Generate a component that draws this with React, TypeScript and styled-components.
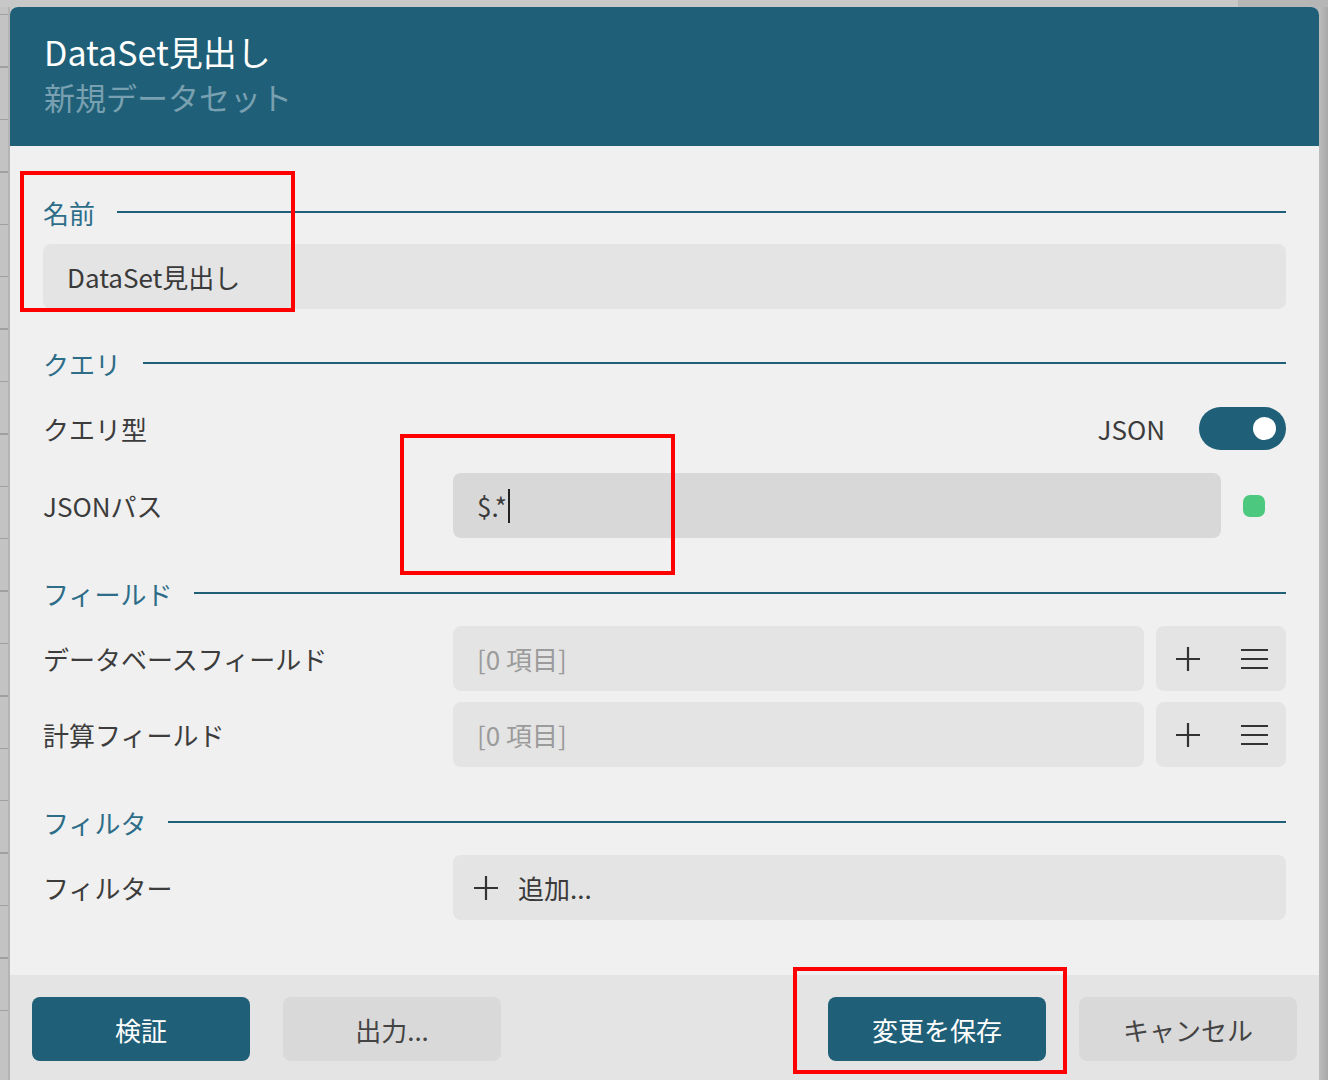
import styled, { createGlobalStyle } from "styled-components";

const GlobalStyle = createGlobalStyle`
  html, body {
    margin: 0;
    padding: 0;
    background: #c6c6c6;
  }
  body {
    font-family: "Noto Sans CJK JP", "Noto Sans", sans-serif;
  }
`;

const TEAL = "#1f5f77";

const Page = styled.div`
  position: relative;
  width: 1328px;
  height: 1080px;
  overflow: hidden;
  display: flex;
  flex-direction: column;
  background: linear-gradient(to right, #c8c8c8 0, #c8c8c8 1238px, #b6b6b6 1238px);
`;

const TopStrip = styled.div`
  height: 7px;
  flex: none;
`;

const Stage = styled.div`
  flex: 1;
  display: flex;
  min-height: 0;
`;

const Ruler = styled.div`
  width: 10px;
  flex: none;
  background-color: #c3c3c3;
  background-image: repeating-linear-gradient(
    to bottom,
    transparent 0px,
    transparent 51px,
    #a0a0a0 51px,
    #a0a0a0 52.4px
  );
  background-position: 0 -44px;
  box-shadow: inset -2px 0 0 #b4b4b4;
`;

const EdgeRight = styled.div`
  width: 9px;
  flex: none;
  background: linear-gradient(to right, #bcbcbc, #a8a8a8);
`;

const Dialog = styled.div`
  width: 1309px;
  flex: none;
  display: flex;
  flex-direction: column;
  background: #f0f0f0;
  border-radius: 8px 8px 0 0;
  overflow: hidden;
`;

const Header = styled.div`
  height: 139px;
  flex: none;
  background: ${TEAL};
  padding: 21px 34px 0;
  box-sizing: border-box;
`;

const Title = styled.div`
  color: #ffffff;
  font-size: 34px;
  line-height: 47px;
`;

const Subtitle = styled.div`
  color: #78a0b1;
  font-size: 31px;
  line-height: 44px;
`;

const Body = styled.div`
  flex: none;
  height: 829px;
  box-sizing: border-box;
  padding: 46px 33px 0 33px;
  display: flex;
  flex-direction: column;
`;

const SectionHead = styled.div<{ $first?: boolean }>`
  display: flex;
  align-items: center;
  gap: 22px;
  height: 40px;
  margin-top: ${(p) => (p.$first ? "0" : "35px")};
  margin-bottom: ${(p) => (p.$first ? "12px" : "13px")};
  color: #2d6d88;
  font-size: 26px;

  &::after {
    content: "";
    flex: 1;
    height: 2px;
    background: ${TEAL};
  }
`;

const NameField = styled.div`
  margin-bottom: -1px;
`;

const Row = styled.div<{ $gapTop?: number }>`
  display: grid;
  grid-template-columns: 410px 1fr;
  align-items: center;
  height: 65px;
  margin-top: ${(p) => p.$gapTop ?? 0}px;
`;

const Label = styled.div`
  font-size: 26px;
  color: #3c3c3c;
`;

const Field = styled.div<{ $focused?: boolean; $muted?: boolean }>`
  height: 65px;
  box-sizing: border-box;
  border-radius: 8px;
  background: ${(p) => (p.$focused ? "#d8d8d8" : "#e4e4e4")};
  display: flex;
  align-items: center;
  padding-left: 24px;
  font-size: 26px;
  color: ${(p) => (p.$muted ? "#9b9b9b" : "#3a3a3a")};
  min-width: 0;
`;

const Caret = styled.span`
  display: inline-block;
  width: 2px;
  height: 34px;
  background: #222;
  margin-left: 1px;
`;

const Controls = styled.div<{ $cols: string; $gap: number }>`
  display: grid;
  grid-template-columns: ${(p) => p.$cols};
  align-items: center;
  column-gap: ${(p) => p.$gap}px;
`;

const RightEnd = styled.div`
  display: flex;
  align-items: center;
  justify-content: flex-end;
  gap: 34px;
  font-size: 26px;
  color: #3c3c3c;
`;

const Toggle = styled.div`
  width: 87px;
  height: 43px;
  border-radius: 22px;
  background: ${TEAL};
  display: flex;
  align-items: center;
  justify-content: flex-end;
  padding-right: 10px;
  box-sizing: border-box;

  &::after {
    content: "";
    width: 23px;
    height: 23px;
    border-radius: 50%;
    background: #ffffff;
  }
`;

const StatusDot = styled.div`
  width: 22px;
  height: 22px;
  border-radius: 7px;
  background: #4cc97e;
`;

const IconGroup = styled.div`
  height: 65px;
  border-radius: 8px;
  background: #e4e4e4;
  display: flex;
  align-items: center;
  justify-content: space-between;
  padding: 0 18px 0 19px;
  box-sizing: border-box;
`;

const AddField = styled(Field)`
  gap: 19px;
  padding-left: 20px;
`;

const Footer = styled.div`
  flex: 1;
  background: #e4e4e4;
  display: flex;
  align-items: flex-start;
  padding: 22px 22px 0;
  gap: 33px;
`;

const Spacer = styled.div`
  flex: 1;
`;

const Button = styled.div<{ $primary?: boolean }>`
  width: 218px;
  height: 64px;
  border-radius: 8px;
  display: flex;
  align-items: center;
  justify-content: center;
  font-size: 26px;
  background: ${(p) => (p.$primary ? TEAL : "#d9d9d9")};
  color: ${(p) => (p.$primary ? "#ffffff" : "#444444")};
  box-sizing: border-box;
`;

const Mark = styled.div`
  position: absolute;
  border: 4px solid #ff0000;
  box-sizing: border-box;
  pointer-events: none;
`;

function PlusIcon() {
  return (
    <svg width="26" height="26" viewBox="0 0 26 26">
      <path d="M13 1v24M1 13h24" stroke="#333" strokeWidth="2.2" fill="none" />
    </svg>
  );
}

function MenuIcon() {
  return (
    <svg width="27" height="22" viewBox="0 0 27 22">
      <path d="M0 2h27M0 11h27M0 20h27" stroke="#333" strokeWidth="2.2" fill="none" />
    </svg>
  );
}

function ListRow({ label, gapTop }: { label: string; gapTop?: number }) {
  return (
    <Row $gapTop={gapTop}>
      <Label>{label}</Label>
      <Controls $cols="1fr 130px" $gap={12}>
        <Field $muted>[0 項目]</Field>
        <IconGroup>
          <PlusIcon />
          <MenuIcon />
        </IconGroup>
      </Controls>
    </Row>
  );
}

export default function App() {
  return (
    <>
      <GlobalStyle />
      <Page>
        <TopStrip />
        <Stage>
          <Ruler />
          <Dialog>
            <Header>
              <Title>DataSet見出し</Title>
              <Subtitle>新規データセット</Subtitle>
            </Header>
            <Body>
              <SectionHead $first>名前</SectionHead>
              <NameField>
                <Field>DataSet見出し</Field>
              </NameField>

              <SectionHead>クエリ</SectionHead>
              <Row>
                <Label>クエリ型</Label>
                <RightEnd>
                  JSON
                  <Toggle />
                </RightEnd>
              </Row>
              <Row $gapTop={12}>
                <Label>JSONパス</Label>
                <Controls $cols="1fr 43px" $gap={22}>
                  <Field $focused>
                    $.*
                    <Caret />
                  </Field>
                  <StatusDot />
                </Controls>
              </Row>

              <SectionHead>フィールド</SectionHead>
              <ListRow label="データベースフィールド" />
              <ListRow label="計算フィールド" gapTop={11} />

              <SectionHead>フィルタ</SectionHead>
              <Row>
                <Label>フィルター</Label>
                <AddField>
                  <PlusIcon />
                  追加...
                </AddField>
              </Row>
            </Body>
            <Footer>
              <Button $primary>検証</Button>
              <Button>出力...</Button>
              <Spacer />
              <Button $primary>変更を保存</Button>
              <Button>キャンセル</Button>
            </Footer>
          </Dialog>
          <EdgeRight />
        </Stage>
        <Mark style={{ left: 20, top: 171, width: 275, height: 141 }} />
        <Mark style={{ left: 400, top: 434, width: 275, height: 141 }} />
        <Mark style={{ left: 793, top: 967, width: 274, height: 107 }} />
      </Page>
    </>
  );
}
